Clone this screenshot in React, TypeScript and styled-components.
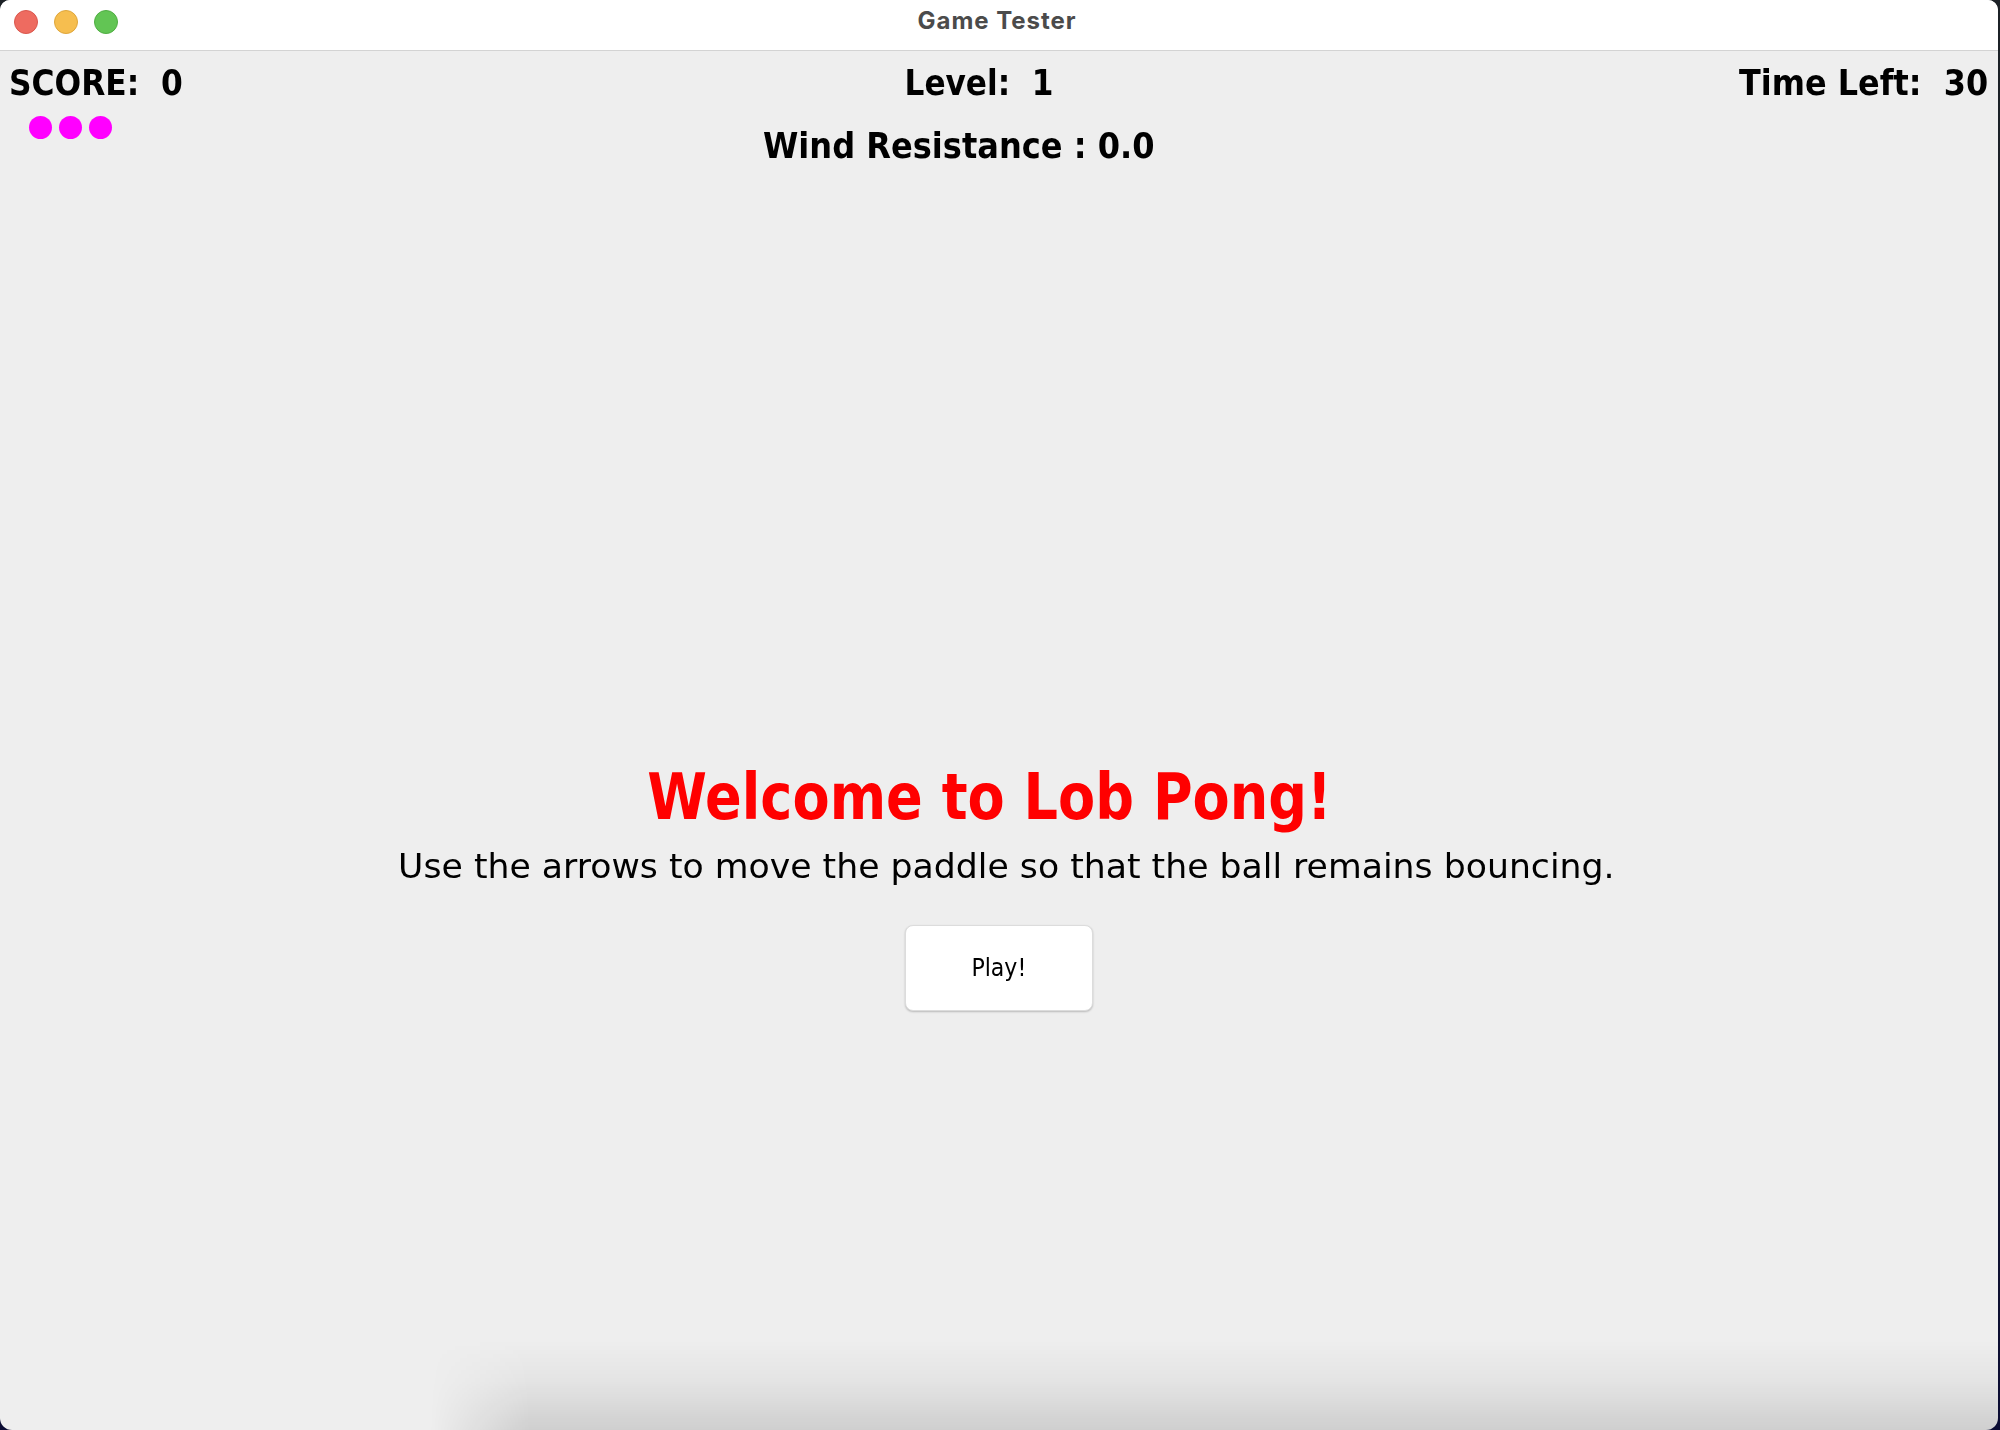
import React from "react";
import styled, { createGlobalStyle } from "styled-components";

const Global = createGlobalStyle`
  html, body { margin: 0; padding: 0; background: #141826; }
  #root { width: 2000px; height: 1430px; }
`;

const Screen = styled.div`
  width: 2000px;
  height: 1430px;
  display: flex;
  background: linear-gradient(180deg, #1c2126 0%, #141a2a 60%, #0b0c33 100%);
`;

const Window = styled.div`
  position: relative;
  width: 1998px;
  height: 1430px;
  background: #eeeeee;
  border-radius: 10px 10px 12px 12px;
  overflow: hidden;
  display: flex;
  flex-direction: column;
`;

const TitleBar = styled.div`
  flex: none;
  height: 50px;
  background: #ffffff;
  border-bottom: 1px solid #d3d3d3;
  display: grid;
  grid-template-columns: 1fr auto 1fr;
  align-items: start;
`;

const Lights = styled.div`
  display: flex;
  gap: 16px;
  padding: 10px 0 0 14px;
`;

const Light = styled.span<{ $fill: string; $edge: string }>`
  width: 24px;
  height: 24px;
  border-radius: 50%;
  box-sizing: border-box;
  background: ${(p) => p.$fill};
  border: 1px solid ${(p) => p.$edge};
`;

const WindowTitle = styled.div`
  padding-top: 9px;
  margin-right: 4px;
  font-family: Inter, "Liberation Sans", sans-serif;
  font-weight: 700;
  font-size: 24px;
  line-height: 24px;
  letter-spacing: 0.95px;
  color: #4b4b4b;
`;

const Content = styled.div`
  flex: 1;
  display: flex;
  flex-direction: column;
`;

const HudRow = styled.div`
  display: grid;
  grid-template-columns: 1fr auto 1fr;
  padding: 12px 10px 0 9px;
`;

const Text = styled.span<{
  $size: number;
  $lh: number;
  $weight?: number;
  $sx?: number;
  $origin?: string;
  $color?: string;
}>`
  display: inline-block;
  font-family: "DejaVu Sans", "Liberation Sans", sans-serif;
  font-weight: ${(p) => p.$weight ?? 700};
  font-size: ${(p) => p.$size}px;
  line-height: ${(p) => p.$lh}px;
  color: ${(p) => p.$color ?? "#000000"};
  white-space: pre;
  transform: scaleX(${(p) => p.$sx ?? 1});
  transform-origin: ${(p) => p.$origin ?? "center"};
`;

const Left = styled.div`
  justify-self: start;
`;

const Center = styled.div<{ $shift: number; $top?: number }>`
  justify-self: center;
  margin-top: ${(p) => p.$top ?? 0}px;
  margin-right: ${(p) => (p.$shift < 0 ? -p.$shift * 2 : 0)}px;
  margin-left: ${(p) => (p.$shift > 0 ? p.$shift * 2 : 0)}px;
`;

const Right = styled.div`
  justify-self: end;
`;

const LivesRow = styled.div`
  display: grid;
  grid-template-columns: 1fr auto 1fr;
`;

const Lives = styled.div`
  justify-self: start;
  display: flex;
  gap: 7px;
  padding: 13px 0 0 29px;
`;

const Ball = styled.span`
  width: 23px;
  height: 23px;
  border-radius: 50%;
  background: #ff00ff;
`;

const Stage = styled.div`
  margin-top: 595px;
  display: flex;
  flex-direction: column;
  align-items: center;
`;

const Intro = styled.div<{ $shift: number; $top?: number }>`
  margin-top: ${(p) => p.$top ?? 0}px;
  margin-right: ${(p) => (p.$shift < 0 ? -p.$shift * 2 : 0)}px;
  margin-left: ${(p) => (p.$shift > 0 ? p.$shift * 2 : 0)}px;
`;

const PlayButton = styled.button`
  margin-top: 39px;
  width: 188px;
  height: 86px;
  box-sizing: border-box;
  background: #ffffff;
  border: 1px solid #dcdcdc;
  border-radius: 8px;
  box-shadow: 0 1px 2px rgba(0, 0, 0, 0.22);
  display: flex;
  align-items: center;
  justify-content: center;
  padding: 0;
  cursor: pointer;
`;

const BottomShade = styled.div`
  position: absolute;
  left: 430px;
  right: 0;
  bottom: 0;
  height: 90px;
  pointer-events: none;
  background: linear-gradient(180deg, rgba(0, 0, 0, 0) 0%, rgba(0, 0, 0, 0.04) 45%, rgba(0, 0, 0, 0.13) 100%);
  -webkit-mask-image: linear-gradient(90deg, transparent 0px, #000 100px);
  mask-image: linear-gradient(90deg, transparent 0px, #000 100px);
`;

export default function App() {
  return (
    <Screen>
      <Global />
      <Window>
        <TitleBar>
          <Lights>
            <Light $fill="#ee6b60" $edge="#d9574d" />
            <Light $fill="#f6be4f" $edge="#dea63c" />
            <Light $fill="#62c554" $edge="#50ad43" />
          </Lights>
          <WindowTitle>Game Tester</WindowTitle>
          <div />
        </TitleBar>
        <Content>
          <HudRow>
            <Left>
              <Text $size={36} $lh={40} $sx={0.87} $origin="left">
                {"SCORE:  0"}
              </Text>
            </Left>
            <Center $shift={-19}>
              <Text $size={36} $lh={40} $sx={0.866}>
                {"Level:  1"}
              </Text>
            </Center>
            <Right>
              <Text $size={36} $lh={40} $sx={0.886} $origin="right">
                {"Time Left:  30"}
              </Text>
            </Right>
          </HudRow>
          <LivesRow>
            <Lives>
              <Ball />
              <Ball />
              <Ball />
            </Lives>
            <Center $shift={-40} $top={22.5}>
              <Text $size={36} $lh={40} $sx={0.891}>
                {"Wind Resistance : 0.0"}
              </Text>
            </Center>
            <div />
          </LivesRow>
          <Stage>
            <Intro $shift={-9}>
              <Text $size={64} $lh={72} $sx={0.846} $color="#ff0000">
                Welcome to Lob Pong!
              </Text>
            </Intro>
            <Intro $shift={7} $top={13}>
              <Text $size={34} $lh={40} $weight={400} $sx={1.02}>
                Use the arrows to move the paddle so that the ball remains bouncing.
              </Text>
            </Intro>
            <PlayButton>
              <Text $size={24} $lh={28} $weight={400} $sx={0.92}>
                Play!
              </Text>
            </PlayButton>
          </Stage>
        </Content>
        <BottomShade />
      </Window>
    </Screen>
  );
}
